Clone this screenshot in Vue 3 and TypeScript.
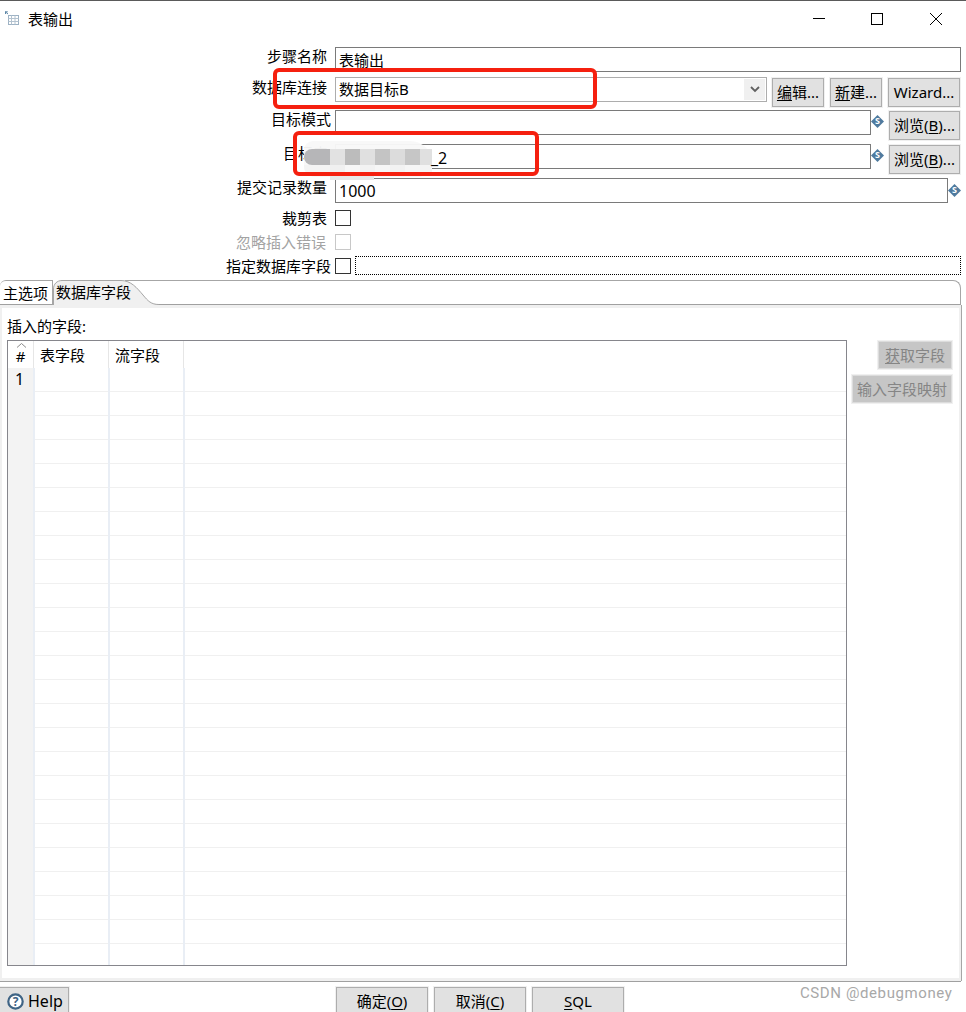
<script setup lang="ts">
const rowCount = 25;
const mosaicColors = ["#b6b6b8", "#b6b6b8", "#e2e2e2", "#bcbcbc", "#e0e0e0", "#c4c4c4", "#dcdcdc", "#c6c6c6", "#e0e0e0"];
const mosaicLowColors = ["#f4f4f4", "#f4f4f4", "#f0f0f0", "#f7f7f7", "#f2f2f2", "#f6f6f6", "#f2f2f2", "#f6f6f6", "#f4f4f4"];
</script>

<template>
  <div class="window">
    <header class="titlebar">
      <svg class="app-icon" width="16" height="16" viewBox="0 0 16 16">
        <path d="M1 0.5l3 2.5M1.5 3V0.8H3.8" fill="none" stroke="#5c86a6" stroke-width="1" />
        <rect x="4.5" y="4.5" width="10" height="9" fill="#fff" stroke="#9db2c4" />
        <path d="M4.5 7.5h10M4.5 10.5h10M7.5 4.5v9M11 4.5v9" stroke="#b4c3d0" />
      </svg>
      <span class="title">表输出</span>
      <div class="controls">
        <svg width="58" height="14" viewBox="0 0 58 14"><path d="M23 6.5h12" stroke="#000" /></svg>
        <svg width="58" height="14" viewBox="0 0 58 14"><rect x="23.5" y="1.5" width="11" height="11" fill="none" stroke="#000" /></svg>
        <svg width="58" height="14" viewBox="0 0 58 14"><path d="M24 1l12 12M36 1L24 13" stroke="#000" /></svg>
      </div>
    </header>

    <section class="form">
      <div class="row">
        <label class="label">步骤名称</label>
        <div class="input grow wide"><span class="value">表输出</span></div>
      </div>
      <div class="row">
        <label class="label conn">数据库连接</label>
        <div class="combo">
          <span class="value">数据目标B</span>
          <span class="arrow">
            <svg width="10" height="7" viewBox="0 0 10 7"><path d="M1 1l4 4 4-4" fill="none" stroke="#606060" stroke-width="1.8" /></svg>
          </span>
        </div>
        <button class="btn edit"><u>编</u>辑...</button>
        <button class="btn edit"><u>新</u>建...</button>
        <button class="btn wizard">Wizard...</button>
      </div>
      <div class="row">
        <label class="label far">目标模式</label>
        <div class="input grow"></div>
        <svg class="var" width="13" height="13" viewBox="0 0 13 13">
          <path d="M6.5 0L13 6.5 6.5 13 0 6.5z" fill="#4f7a9e" />
          <text x="6.5" y="9.3" text-anchor="middle">S</text>
        </svg>
        <button class="btn browse">浏览(<u>B</u>)...</button>
      </div>
      <div class="row">
        <label class="label target">目标表</label>
        <div class="input grow"></div>
        <svg class="var" width="13" height="13" viewBox="0 0 13 13">
          <path d="M6.5 0L13 6.5 6.5 13 0 6.5z" fill="#4f7a9e" />
          <text x="6.5" y="9.3" text-anchor="middle">S</text>
        </svg>
        <button class="btn browse">浏览(<u>B</u>)...</button>
      </div>
      <div class="row">
        <label class="label">提交记录数量</label>
        <div class="input grow"><span class="value latin">1000</span></div>
        <svg class="var tail" width="13" height="13" viewBox="0 0 13 13">
          <path d="M6.5 0L13 6.5 6.5 13 0 6.5z" fill="#4f7a9e" />
          <text x="6.5" y="9.3" text-anchor="middle">S</text>
        </svg>
      </div>
      <div class="row">
        <label class="label short">裁剪表</label>
        <span class="check"></span>
      </div>
      <div class="row">
        <label class="label short muted">忽略插入错误</label>
        <span class="check off"></span>
      </div>
      <div class="row">
        <label class="label short far">指定数据库字段</label>
        <span class="check"></span>
        <span class="dotted"></span>
      </div>
    </section>

    <section class="folder">
      <div class="tabs">
        <div class="tab first">主选项</div>
        <div class="tab active">
          <svg class="tab-shape" width="106" height="26" viewBox="0 0 106 26">
            <path d="M0.5 25V9C0.5 4 4 0.5 9 0.5H68C78 0.5 84 8 90 15C95 21 98 24.5 106 24.5V26H0.5z" fill="#f0f0f0" />
            <path d="M0.5 25V9C0.5 4 4 0.5 9 0.5H68C78 0.5 84 8 90 15C95 21 98 24.5 106 24.5" fill="none" stroke="#a6a6a6" />
          </svg>
          <span class="tab-text">数据库字段</span>
        </div>
        <div class="tab-rest"></div>
      </div>
      <div class="panel">
        <div class="fields">
          <div class="fields-title">插入的字段:</div>
          <div class="table">
            <div class="thead">
              <div class="th num">
                <svg class="sort" width="11" height="5" viewBox="0 0 11 5"><path d="M1 4.5L5.5 0.5 10 4.5" fill="none" stroke="#8a8a8a" /></svg>
                <span>#</span>
              </div>
              <div class="th col">表字段</div>
              <div class="th col">流字段</div>
            </div>
            <div v-for="n in rowCount" :key="n" class="tr">
              <div class="td num">{{ n === 1 ? "1" : "" }}</div>
              <div class="td col"></div>
              <div class="td col"></div>
              <div class="td"></div>
            </div>
          </div>
        </div>
        <div class="side">
          <button class="btn side-btn" disabled><u>获</u>取字段</button>
          <button class="btn side-btn map" disabled>输入字段映射</button>
        </div>
      </div>
    </section>

    <footer class="footer">
      <button class="btn help">
        <svg class="help-icon" width="17" height="17" viewBox="0 0 17 17">
          <circle cx="8.5" cy="8.5" r="7.2" fill="#fff" stroke="#3f6485" stroke-width="2.2" />
          <text x="8.5" y="12.8" text-anchor="middle" class="help-mark">?</text>
        </svg>
        Help
      </button>
      <button class="btn action">确定(<u>O</u>)</button>
      <button class="btn action">取消(<u>C</u>)</button>
      <button class="btn action"><u>S</u>QL</button>
    </footer>

    <!-- annotations drawn over the screenshot -->
    <div class="smudge">
      <div class="mosaic">
        <span v-for="(color, i) in mosaicColors" :key="i" :style="{ background: color }"></span>
      </div>
      <div class="mosaic low">
        <span v-for="(color, i) in mosaicLowColors" :key="i" :style="{ background: color }"></span>
      </div>
      <div class="mosaic-foot"></div>
    </div>
    <span class="target-tail">_2</span>
    <div class="mark mark-conn"></div>
    <div class="mark mark-table"></div>
    <div class="watermark">CSDN @debugmoney</div>
  </div>
</template>

<style>
html,
body {
  margin: 0;
  background: #fff;
}
</style>

<style scoped>
.window {
  position: relative;
  width: 966px;
  height: 1012px;
  overflow: hidden;
  background: #fff;
  color: #000;
  font-family: "Noto Sans", "Noto Sans CJK SC", sans-serif;
  font-size: 15px;
  box-sizing: border-box;
}

.titlebar {
  display: flex;
  align-items: center;
  height: 38px;
  box-sizing: border-box;
  border-top: 1px solid #5a5a5a;
  padding-left: 4px;
}

.app-icon {
  margin-right: 8px;
  margin-top: -2px;
}

.title {
  font-size: 15px;
  line-height: 36px;
  margin-top: -2px;
}

.controls {
  display: flex;
  margin-left: auto;
  margin-right: 2px;
  margin-top: -1px;
}

.form {
  display: grid;
  grid-template-rows: 30px 33px 34px 34px 32px 24px 24px 22px;
  padding-top: 9px;
  height: 242px;
  box-sizing: border-box;
}

.row {
  display: flex;
  align-items: flex-start;
  padding-right: 5px;
}

.label {
  flex: none;
  box-sizing: border-box;
  width: 335px;
  padding-right: 8px;
  text-align: right;
  line-height: 18px;
  white-space: nowrap;
}

.label.far {
  padding-right: 4px;
}

.label.target {
  padding-right: 7px;
}

.label.conn {
  line-height: 20px;
}

.label.short {
  line-height: 16px;
}

.label.muted {
  color: #a3a3a3;
  padding-right: 9px;
}

.input {
  box-sizing: border-box;
  height: 25px;
  min-width: 0;
  border: 1px solid #7a7a7a;
  background: #fff;
  display: flex;
  align-items: center;
}

.grow {
  flex: 1;
}

.value {
  padding-left: 3px;
  font-size: 15px;
  line-height: 26px;
  margin-top: 1px;
}

.latin {
  font-size: 16px;
}

.combo {
  box-sizing: border-box;
  display: flex;
  align-items: center;
  justify-content: space-between;
  width: 432px;
  height: 25px;
  margin-right: 5px;
  border: 1px solid #adadad;
}

.combo .value {
  margin-top: -1px;
}

.arrow {
  display: flex;
  align-items: center;
  justify-content: center;
  width: 21px;
  height: 21px;
  margin-right: 1px;
  background: #f0f0f0;
}

.btn {
  box-sizing: border-box;
  height: 29px;
  padding: 0;
  border: 1px solid #adadad;
  outline: 1px solid #f0f0f0;
  background: #e1e1e1;
  color: #000;
  font: inherit;
  font-size: 15px;
  line-height: 24px;
  white-space: nowrap;
}

.btn u {
  text-underline-offset: 2px;
}

.edit {
  width: 52px;
  margin: 1px 6px 0 0;
  padding-bottom: 2px;
}

.wizard {
  width: 72px;
  margin-top: 1px;
  padding-bottom: 2px;
}

.var {
  flex: none;
  margin: 5px 0 0;
}

.var text {
  fill: #fff;
  font-size: 9px;
  font-weight: 700;
}

.var.tail {
  margin-top: 6px;
}

.browse {
  flex: none;
  width: 71px;
  margin: 1px 1px 0 5px;
  padding-bottom: 2px;
}

.check {
  flex: none;
  box-sizing: border-box;
  width: 16px;
  height: 16px;
  border: 1px solid #333;
  background: #fff;
}

.check.off {
  border-color: #c8c8c8;
}

.dotted {
  flex: 1;
  box-sizing: border-box;
  height: 19px;
  margin: -2px 0 0 4px;
  border: 1px dotted #000;
}

.folder {
  display: flex;
  flex-direction: column;
  height: 702px;
  margin-right: 5px;
  box-sizing: border-box;
  border-bottom: 1px solid #a0a0a0;
}

.tabs {
  display: flex;
  height: 25px;
  flex: none;
}

.tab {
  box-sizing: border-box;
  height: 25px;
  line-height: 25px;
}

.tab.first {
  width: 53px;
  padding-left: 3px;
  border-top: 1px solid #a6a6a6;
  border-bottom: 1px solid #a0a0a0;
  border-right: 1px solid #a6a6a6;
  border-top-left-radius: 6px;
  line-height: 24px;
}

.tab.active {
  position: relative;
  width: 106px;
}

.tab-shape {
  position: absolute;
  left: 0;
  top: 0;
}

.tab-text {
  position: relative;
  padding-left: 3px;
}

.tab-rest {
  flex: 1;
  box-sizing: border-box;
  height: 25px;
  border-top: 1px solid #a6a6a6;
  border-right: 1px solid #a6a6a6;
  border-bottom: 1px solid #a0a0a0;
  border-top-right-radius: 8px;
  margin-left: -34px;
  background: transparent;
}

.panel {
  flex: 1;
  display: flex;
  box-sizing: border-box;
  min-height: 0;
  border: 2px solid #f0f0f0;
  border-top-width: 3px;
  border-bottom-width: 3px;
  border-right-color: #f0f0f0;
  box-shadow: 1px 0 0 #a6a6a6;
  padding: 0 0 0 5px;
}

.fields {
  display: flex;
  flex-direction: column;
  width: 840px;
}

.fields-title {
  height: 32px;
  padding-top: 7px;
  box-sizing: border-box;
  font-size: 15px;
  line-height: 22px;
}

.table {
  box-sizing: border-box;
  width: 840px;
  height: 626px;
  border: 1px solid #86868c;
  overflow: hidden;
}

.thead {
  display: flex;
  height: 27px;
}

.th {
  box-sizing: border-box;
  line-height: 28px;
  font-size: 15px;
}

.th.num {
  position: relative;
  width: 26px;
  text-align: center;
  border-right: 1px solid #e6e6e6;
  padding-top: 1px;
}

.sort {
  position: absolute;
  left: 8px;
  top: 2px;
}

.th.col {
  width: 75px;
  padding-left: 6px;
  border-right: 1px solid #e6e6e6;
}

.tr {
  display: flex;
  box-sizing: border-box;
  height: 24px;
  border-bottom: 1px solid #f0f0f0;
}

.td {
  box-sizing: border-box;
  height: 24px;
}

.td.num {
  width: 27px;
  padding-left: 7px;
  background: #f3f3f3;
  border-right: 2px solid #e9eef5;
  font-size: 16px;
  line-height: 22px;
}

.td.col {
  width: 75px;
  border-right: 2px solid #e9eef5;
}

.side {
  display: flex;
  flex-direction: column;
  align-items: flex-end;
  width: 105px;
  padding-top: 33px;
}

.side-btn {
  width: 74px;
  height: 28px;
  margin-bottom: 6px;
  border-color: #dcdcdc;
  outline-color: #f0f0f0;
  background: #c6c6c6;
  color: #858585;
  font-size: 15px;
}

.side-btn.map {
  width: 100px;
}

.footer {
  display: flex;
  align-items: flex-start;
  padding-top: 5px;
  height: 30px;
  box-sizing: border-box;
}

.btn.help,
.action {
  height: 34px;
}

.help {
  display: flex;
  align-items: flex-start;
  gap: 4px;
  width: 69px;
  margin-right: 267px;
  padding: 3px 0 0 7px;
  font-size: 16px;
  line-height: 20px;
  border-left: none;
}

.help-icon {
  margin-top: 2px;
}

.help-mark {
  fill: #3f6485;
  font-size: 12px;
  font-weight: 700;
}

.action {
  width: 92px;
  margin-right: 6px;
  padding-bottom: 6px;
  line-height: 26px;
  font-size: 15px;
}

.smudge {
  position: absolute;
  left: 304px;
  top: 141px;
  width: 128px;
  height: 36px;
  background: rgba(248, 248, 248, 0.96);
  border-radius: 10px 24px 16px 12px;
}

.mosaic {
  position: absolute;
  left: 0;
  top: 8px;
  display: flex;
  width: 128px;
  height: 16px;
  border-radius: 8px 0 0 8px;
  overflow: hidden;
}

.mosaic.low {
  top: 24px;
  height: 10px;
  border-radius: 0 0 0 8px;
}

.mosaic span {
  flex: none;
  width: 15px;
  height: 100%;
}

.mosaic span:first-child {
  width: 11px;
}

.mosaic-foot {
  position: absolute;
  left: 26px;
  top: 34px;
  width: 44px;
  height: 5px;
  background: #e8e8e8;
}

.target-tail {
  position: absolute;
  left: 431px;
  top: 145px;
  font-size: 16px;
  line-height: 26px;
}

.mark {
  position: absolute;
  box-sizing: border-box;
  border: 4px solid #f5200f;
  border-radius: 6px;
}

.mark-conn {
  left: 273px;
  top: 68px;
  width: 324px;
  height: 41px;
}

.mark-table {
  left: 293px;
  top: 131px;
  width: 246px;
  height: 45px;
}

.watermark {
  position: absolute;
  left: 800px;
  top: 983px;
  font-family: "Roboto", sans-serif;
  font-size: 15px;
  letter-spacing: 0.6px;
  line-height: 20px;
  color: #a8a8a8;
}
</style>
